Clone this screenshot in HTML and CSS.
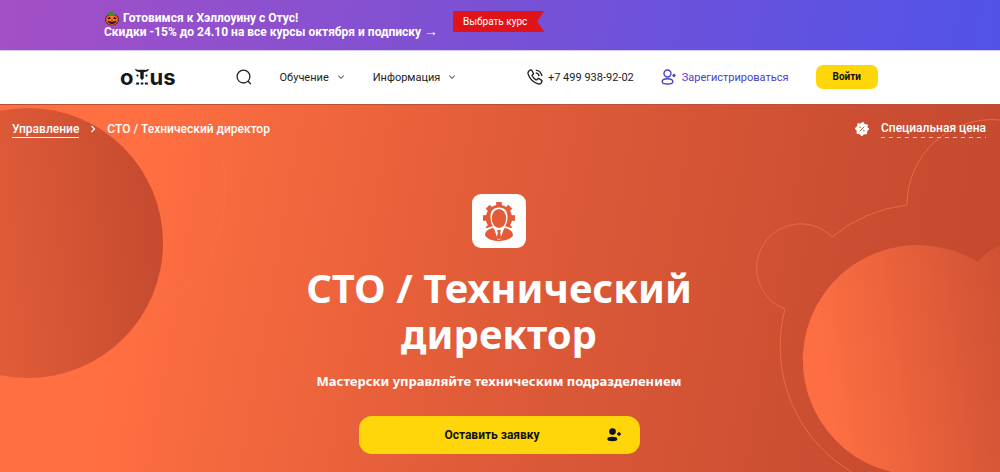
FILE: index.html
```html
<!DOCTYPE html>
<html lang="ru">
<head>
<meta charset="utf-8">
<meta name="viewport" content="width=device-width, initial-scale=1">
<title>CTO / Технический директор</title>
<link rel="stylesheet" href="styles.css">
</head>
<body>
<div class="promo">
  <p class="promo-text">
    <svg class="pumpkin" viewBox="0 0 16 16" aria-hidden="true">
      <ellipse cx="8" cy="9.2" rx="7.4" ry="6.3" fill="#3a1d1a"/>
      <ellipse cx="8" cy="9.2" rx="6.7" ry="5.6" fill="#e8591a"/>
      <ellipse cx="8" cy="9" rx="3.2" ry="5.4" fill="#f4762b"/>
      <path d="M3 2.600Q6 .2 9 1.200L8.600 3.200Q11 3 12.200 4.400Q8 6 4.200 4.400Z" fill="#3d8b2e"/>
      <path d="M3.400 8.600L5.200 6L7 8.600ZM9 8.600L10.800 6L12.600 8.600ZM7.200 10L8 8.800L8.800 10ZM3.200 10.400L5 11.200L6 10.600L7 11.600L8 10.800L9 11.600L10 10.600L11 11.200L12.800 10.400Q11.500 13.800 8 13.800Q4.500 13.800 3.200 10.400Z" fill="#2b1418"/>
    </svg>
    Готовимся к Хэллоуину с Отус!<br>Скидки -15% до 24.10 на все курсы октября и подписку <span class="arrow">→</span>
  </p>
  <a class="promo-link" href="#courses">Выбрать курс</a>
</div>

<header class="header">
  <a class="logo" href="#" aria-label="otus">
    <span>o</span>
    <svg class="owl" viewBox="0 0 15 18" aria-hidden="true">
      <path d="M.5 .8Q3 2.400 5.500 1.800H9.500Q12 2.400 14.500 .8Q14 4 9.200 4.200V10.500H5.800V4.200Q1 4 .5 .8Z"/>
      <circle cx="3" cy="7.600" r="1.100"/><circle cx="12" cy="7.600" r="1.100"/>
      <path d="M5.800 9.500H9.200L7.500 12.500ZM2 14.600h2.600v1.800H1.200ZM6.200 14.600h2.600v1.800H6.200ZM10.400 14.600H13l.8 1.800h-3.400Z"/>
    </svg>
    <span>us</span>
  </a>
  <nav class="nav" aria-label="Основное меню">
    <button class="plain" type="button" aria-label="Поиск">
      <svg class="search" viewBox="0 0 16 16" aria-hidden="true"><circle cx="7.500" cy="7.600" r="6.400"/><path d="M12 12.200L14.800 15"/></svg>
    </button>
    <button class="plain menu" type="button">Обучение
      <svg class="chevron" viewBox="0 0 8 8" aria-hidden="true"><path d="M1.200 2.700L4 5.400L6.800 2.700"/></svg>
    </button>
    <button class="plain menu" type="button">Информация
      <svg class="chevron" viewBox="0 0 8 8" aria-hidden="true"><path d="M1.200 2.700L4 5.400L6.800 2.700"/></svg>
    </button>
  </nav>
  <div class="account">
    <a class="phone" href="tel:+74999389202">
      <svg class="icon" viewBox="0 0 16 16" aria-hidden="true">
        <path d="M2.200 1.800L3.600 1Q4.400.7 4.900 1.500L6.300 4Q6.700 4.800 6 5.400L5.200 6.100Q5 6.500 5.300 7Q6.600 9.400 9 10.800Q9.500 11 9.900 10.700L10.600 9.900Q11.200 9.300 12 9.700L14.400 11.100Q15.200 11.600 14.900 12.400L14.200 13.800Q13.200 15.400 11.100 14.900Q3.500 12.500 1.100 4.900Q.7 2.900 2.200 1.800Z"/>
        <path d="M8.800 1.100Q14 1.700 14.900 7M8.800 3.900Q11.600 4.400 12.100 7"/>
      </svg>
      +7 499 938-92-02
    </a>
    <a class="register" href="#register">
      <svg class="icon" viewBox="0 0 16 16" aria-hidden="true">
        <circle cx="6.500" cy="4.500" r="3.500"/>
        <path d="M6.500 9.800C9.500 9.800 11.800 10.900 11.800 12.700S10.200 15 6.500 15S1.200 14.500 1.200 12.700S3.500 9.800 6.500 9.800ZM11.300 6.500H14.700M13 4.800V8.200"/>
      </svg>
      Зарегистрироваться
    </a>
    <button class="login" type="button">Войти</button>
  </div>
</header>

<main class="hero">
  <svg class="art art-left" viewBox="0 0 240 368" aria-hidden="true">
    <defs><linearGradient id="dark" x1="0" y1="0.100" x2="1" y2="0"><stop offset=".1" stop-color="#ea623c"/><stop offset="1" stop-color="#c3492e"/></linearGradient></defs>
    <path d="M222 50Q236 130 190 178T120 230" fill="none" stroke="#ff7a50" opacity=".3"/>
    <circle cx="28" cy="138" r="135" fill="url(#dark)"/>
  </svg>
  <svg class="art art-right" viewBox="0 1 260 368" aria-hidden="true">
    <defs><linearGradient id="light" gradientUnits="userSpaceOnUse" x1="68" y1="235" x2="275" y2="205"><stop offset=".06" stop-color="#fd6e42"/><stop offset="1" stop-color="#ce5033"/></linearGradient></defs>
    <path d="M260 16A85 85 0 0 0 167 101A146 146 0 0 0 92 133A44 44 0 1 0 45 205A146 146 0 0 0 115 370" fill="none" stroke="#ec6942"/>
    <path d="M260 142Q246 147 238 158A115 115 0 1 0 179 371H260Z" fill="url(#light)"/>
  </svg>

  <div class="topline">
    <nav class="crumbs" aria-label="Навигация">
      <a href="#management">Управление</a>
      <svg class="crumb-sep" viewBox="0 0 8 8" aria-hidden="true"><path d="M2.500 1L5.500 4L2.500 7"/></svg>
      <span>CTO / Технический директор</span>
    </nav>
    <a class="special" href="#price">
      <svg class="badge" viewBox="0 0 14 14" aria-hidden="true">
        <circle cx="7" cy="7" r="5.900" fill="#fff"/>
        <circle cx="7" cy="7" r="5.700" fill="none" stroke="#fff" stroke-width="2.600" stroke-dasharray="0 4.477" stroke-linecap="round"/>
        <path d="M5 9L9 5" stroke="#d05033" stroke-linecap="round"/><circle cx="5.100" cy="5.300" r=".8" fill="#d05033"/><circle cx="8.900" cy="8.700" r=".8" fill="#d05033"/>
      </svg>
      <span>Специальная цена</span>
    </a>
  </div>

  <section class="intro">
    <svg class="course-icon" viewBox="0 0 54 54" aria-hidden="true">
      <rect width="54" height="54" rx="9" fill="#fff"/>
      <g fill="#e35b38">
        <circle cx="27" cy="24" r="13.200"/>
        <path d="M24.200 8h5.600v32h-5.600z"/>
        <path d="M24.200 8h5.600v32h-5.600z" transform="rotate(45 27 24)"/>
        <path d="M24.200 8h5.600v32h-5.600z" transform="rotate(90 27 24)"/>
        <path d="M24.200 8h5.600v32h-5.600z" transform="rotate(135 27 24)"/>
      </g>
      <path d="M27 13.600C21 13.600 18.400 17.500 18.500 23C18.600 27.500 19.500 30 21 32L11 35.500V48H43V35.500L33 32C34.500 30 35.400 27.500 35.500 23C35.600 17.500 33 13.600 27 13.600Z" fill="#fff"/>
      <ellipse cx="27" cy="24.500" rx="7.200" ry="9.500" fill="#e35b38"/>
      <path d="M20.500 34C16 35.500 13 37 13 41.500C18 49 36 49 41 41.500C41 37 38 35.500 33.500 34L27 37.200Z" fill="#e35b38"/>
      <path d="M22 34.500L26 46H28L32 34.500L27 36.500Z" fill="#fff"/>
      <path d="M25 36H29L28.200 38.500L29.200 43.500L27 46L24.800 43.500L25.800 38.500Z" fill="#e35b38"/>
    </svg>
    <h1>CTO / Технический директор</h1>
    <p class="lead">Мастерски управляйте техническим подразделением</p>
    <button class="apply" type="button">
      <span>Оставить заявку</span>
      <svg class="apply-icon" viewBox="0 0 14 14" aria-hidden="true"><circle cx="5.500" cy="3.600" r="3.300"/><ellipse cx="5.300" cy="11" rx="5" ry="2.200"/><path d="M11.300 4h1.400v1.300H14v1.400h-1.300V8h-1.400V6.700H10V5.300h1.300Z"/></svg>
    </button>
  </section>
</main>
</body>
</html>
```

FILE: styles.css
```css
* {
  box-sizing: border-box;
}

body {
  margin: 0;
  min-height: 100vh;
  display: flex;
  flex-direction: column;
  font-family: Roboto, "Liberation Sans", sans-serif;
  font-size: 11px;
  color: #222;
}

a {
  color: inherit;
  text-decoration: none;
}

button {
  border: 0;
  font: inherit;
  color: inherit;
  cursor: pointer;
}

.promo {
  display: flex;
  align-items: flex-start;
  gap: 15px;
  padding: 11px 104px;
  background: linear-gradient(100deg, #a44fc6, #7951d5 50%, #5153e8);
  color: #fff;
}

.promo-text {
  margin: 0;
  font-size: 12px;
  font-weight: 700;
  line-height: 14px;
}

.pumpkin {
  width: 16px;
  height: 15px;
  margin-bottom: -2px;
  vertical-align: top;
}

.arrow {
  font-size: 14px;
  font-weight: 400;
  line-height: 1px;
}

.promo-link {
  padding: 0 17px 0 10px;
  background: #e01319;
  clip-path: polygon(0 0, 100% 0, calc(100% - 7px) 50%, 100% 100%, 0 100%);
  font-size: 10px;
  line-height: 21px;
}

.header {
  display: flex;
  align-items: center;
  padding: 14px 122px 15px 120px;
  border-top: 1px solid #d5cbea;
  background: #fff;
}

.logo {
  display: flex;
  align-items: center;
  font-family: Inter, sans-serif;
  font-size: 22px;
  font-weight: 700;
  line-height: 24px;
  color: #17181c;
}

.owl {
  width: 16px;
  height: 18px;
  fill: #17181c;
}

.nav {
  display: flex;
  align-items: center;
  gap: 28px;
  margin-left: 60px;
}

.plain {
  padding: 0;
  background: none;
}

.menu {
  display: flex;
  align-items: center;
  gap: 8px;
}

.search {
  display: block;
  width: 16px;
  height: 16px;
  fill: none;
  stroke: #222;
  stroke-width: 1.3;
}

.chevron {
  width: 8px;
  height: 8px;
  fill: none;
  stroke: #222;
}

.account {
  display: flex;
  align-items: center;
  gap: 27px;
  margin-left: auto;
}

.phone,
.register {
  display: flex;
  align-items: center;
  gap: 5px;
}

.register {
  color: #4840c8;
}

.icon {
  width: 16px;
  height: 16px;
  fill: none;
  stroke: currentColor;
  stroke-width: 1.4;
}

.login {
  padding: 0 17px;
  border-radius: 7px;
  background: #ffd60a;
  color: #111;
  font-size: 10px;
  font-weight: 700;
  line-height: 24px;
}

.hero {
  position: relative;
  flex: 1;
  overflow: hidden;
  padding: 15px 14px 18px 12px;
  border-top: 1px solid #b85136;
  background: linear-gradient(100deg, #ff6f41 14%, #e15c39 48%, #cb4e32 82%, #c3482d);
  color: #fff;
}

.art {
  position: absolute;
  top: 0;
  height: 368px;
}

.art-left {
  left: 0;
  width: 240px;
}

.art-right {
  right: 0;
  width: 260px;
}

.topline {
  position: relative;
  display: flex;
  justify-content: space-between;
  font-size: 12px;
  font-weight: 500;
  line-height: 16px;
}

.crumbs,
.special {
  display: flex;
  align-items: center;
}

.crumbs {
  gap: 10px;
}

.crumbs a {
  border-bottom: 1px solid #fff;
}

.crumb-sep {
  width: 8px;
  height: 8px;
  fill: none;
  stroke: #fff;
  stroke-width: 1.3;
}

.special {
  gap: 12px;
}

.special span {
  padding-bottom: 2px;
  background: repeating-linear-gradient(90deg, #f3c5b7 0 4px, transparent 4px 8px) bottom / 100% 1px no-repeat;
}

.badge {
  width: 14px;
  height: 14px;
}

.intro {
  position: relative;
  display: flex;
  flex-direction: column;
  align-items: center;
  padding-top: 56px;
  text-align: center;
}

.course-icon {
  width: 54px;
  height: 54px;
}

h1 {
  max-width: 440px;
  margin: 17px 0 0;
  font-family: "Noto Sans", sans-serif;
  font-size: 40px;
  font-weight: 700;
  line-height: 46px;
}

.lead {
  margin: 15px 0 26px;
  font-family: "Noto Sans", sans-serif;
  font-size: 13px;
  font-weight: 700;
  line-height: 18px;
}

.apply {
  display: flex;
  align-items: center;
  width: 281px;
  max-width: 100%;
  padding: 0 19px;
  border-radius: 13px;
  background: #ffd60a;
  color: #111;
  font-size: 12px;
  font-weight: 700;
  line-height: 38px;
}

.apply span {
  flex: 1;
}

.apply-icon {
  width: 14px;
  height: 14px;
  fill: #111126;
}
```
